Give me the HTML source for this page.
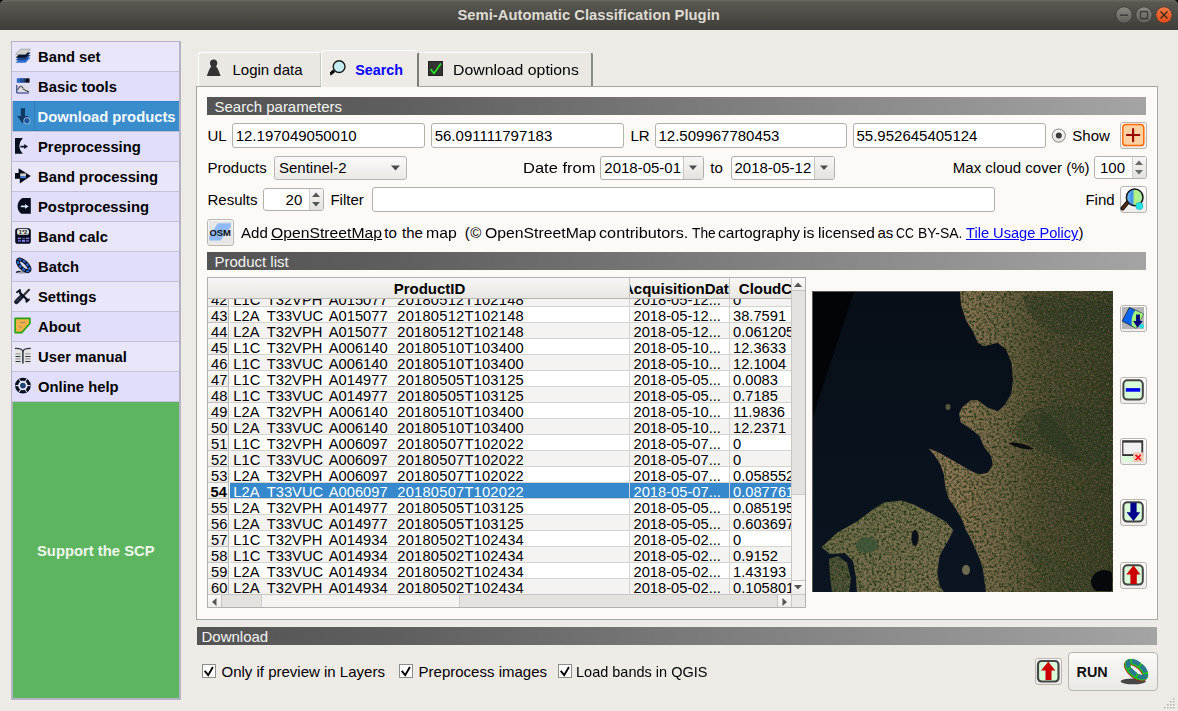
<!DOCTYPE html><html><head><meta charset="utf-8"><style>
html,body{margin:0;padding:0;}
body{width:1178px;height:711px;overflow:hidden;position:relative;background:#eeeae6;font-family:"Liberation Sans",sans-serif;}
.t{position:absolute;white-space:nowrap;line-height:1;}
div{box-sizing:border-box;}
svg{position:absolute;}
.inp{position:absolute;background:#fff;border:1px solid #b2b0ab;border-radius:3px;}
.btn{position:absolute;background:linear-gradient(#fbfaf9,#ebe9e6);border:1px solid #b9b6b1;border-radius:3px;}
</style></head><body>
<div style="position:absolute;left:0px;top:0px;width:1178px;height:10px;background:#000;"></div>
<div style="position:absolute;left:0px;top:0px;width:1178px;height:30px;background:linear-gradient(#5c5a53,#3e3d39);border-radius:5px 5px 0 0;box-shadow:inset 0 1.5px 0 #67655c;"></div>
<div class="t" style="left:457.5px;top:7.87px;font-size:14.8px;font-weight:bold;color:#dfdbd2;">Semi-Automatic Classification Plugin</div>
<svg style="position:absolute;left:1114px;top:5px;" width="62" height="21" viewBox="0 0 62 21">
<defs><linearGradient id="wg" x1="0" y1="0" x2="0" y2="1"><stop offset="0" stop-color="#8c8a84"/><stop offset="1" stop-color="#5f5d58"/></linearGradient>
<linearGradient id="wo" x1="0" y1="0" x2="0" y2="1"><stop offset="0" stop-color="#f47a45"/><stop offset="1" stop-color="#df4a16"/></linearGradient></defs>
<circle cx="10" cy="10" r="8.2" fill="url(#wg)" stroke="#3a3935" stroke-width="0.8"/>
<rect x="6" y="9.5" width="8" height="1.4" fill="#3b3a36"/>
<circle cx="30" cy="10" r="8.2" fill="url(#wg)" stroke="#3a3935" stroke-width="0.8"/>
<rect x="26.5" y="6.6" width="7" height="7" fill="none" stroke="#3b3a36" stroke-width="1.3"/>
<circle cx="50" cy="10" r="8.2" fill="url(#wo)" stroke="#3a3935" stroke-width="0.8"/>
<path d="M46.5 6.5 L53.5 13.5 M53.5 6.5 L46.5 13.5" stroke="#3b2a20" stroke-width="1.4"/>
</svg>
<div style="position:absolute;left:11px;top:41px;width:170px;height:659px;background:#5eb560;border:1px solid #b6b3c6;border-width:1px 2px 2px 2px;"></div>
<div style="position:absolute;left:12px;top:42px;width:167px;height:29px;background:#e9e6f9;"></div>
<div style="position:absolute;left:12px;top:71px;width:167px;height:1px;background:#c4c0d6;"></div>
<div class="t" style="left:38px;top:49.87px;font-size:14.8px;font-weight:bold;color:#000;">Band set</div>
<div style="position:absolute;left:12px;top:72px;width:167px;height:29px;background:#e1defb;"></div>
<div style="position:absolute;left:12px;top:101px;width:167px;height:1px;background:#c4c0d6;"></div>
<div class="t" style="left:38px;top:79.87px;font-size:14.8px;font-weight:bold;color:#000;">Basic tools</div>
<div style="position:absolute;left:12px;top:131px;width:167px;height:1px;background:#c4c0d6;"></div>
<div style="position:absolute;left:13px;top:101px;width:166px;height:30px;background:#3a8dcc;border-top:1px solid #3283c2;border-bottom:1px solid #3283c2;"></div>
<div style="position:absolute;left:34px;top:102px;width:1px;height:29px;background:#2f7fbd;"></div>
<div class="t" style="left:37.5px;top:109.87px;font-size:14.8px;font-weight:bold;color:#f4f8fc;">Download products</div>
<div style="position:absolute;left:12px;top:132px;width:167px;height:29px;background:#e1defb;"></div>
<div style="position:absolute;left:12px;top:161px;width:167px;height:1px;background:#c4c0d6;"></div>
<div class="t" style="left:38px;top:139.87px;font-size:14.8px;font-weight:bold;color:#000;">Preprocessing</div>
<div style="position:absolute;left:12px;top:162px;width:167px;height:29px;background:#e9e6f9;"></div>
<div style="position:absolute;left:12px;top:191px;width:167px;height:1px;background:#c4c0d6;"></div>
<div class="t" style="left:38px;top:169.87px;font-size:14.8px;font-weight:bold;color:#000;">Band processing</div>
<div style="position:absolute;left:12px;top:192px;width:167px;height:29px;background:#e1defb;"></div>
<div style="position:absolute;left:12px;top:221px;width:167px;height:1px;background:#c4c0d6;"></div>
<div class="t" style="left:38px;top:199.87px;font-size:14.8px;font-weight:bold;color:#000;">Postprocessing</div>
<div style="position:absolute;left:12px;top:222px;width:167px;height:29px;background:#e9e6f9;"></div>
<div style="position:absolute;left:12px;top:251px;width:167px;height:1px;background:#c4c0d6;"></div>
<div class="t" style="left:38px;top:229.87px;font-size:14.8px;font-weight:bold;color:#000;">Band calc</div>
<div style="position:absolute;left:12px;top:252px;width:167px;height:29px;background:#e1defb;"></div>
<div style="position:absolute;left:12px;top:281px;width:167px;height:1px;background:#c4c0d6;"></div>
<div class="t" style="left:38px;top:259.87px;font-size:14.8px;font-weight:bold;color:#000;">Batch</div>
<div style="position:absolute;left:12px;top:282px;width:167px;height:29px;background:#e9e6f9;"></div>
<div style="position:absolute;left:12px;top:311px;width:167px;height:1px;background:#c4c0d6;"></div>
<div class="t" style="left:38px;top:289.87px;font-size:14.8px;font-weight:bold;color:#000;">Settings</div>
<div style="position:absolute;left:12px;top:312px;width:167px;height:29px;background:#e1defb;"></div>
<div style="position:absolute;left:12px;top:341px;width:167px;height:1px;background:#c4c0d6;"></div>
<div class="t" style="left:38px;top:319.87px;font-size:14.8px;font-weight:bold;color:#000;">About</div>
<div style="position:absolute;left:12px;top:342px;width:167px;height:29px;background:#e9e6f9;"></div>
<div style="position:absolute;left:12px;top:371px;width:167px;height:1px;background:#c4c0d6;"></div>
<div class="t" style="left:38px;top:349.87px;font-size:14.8px;font-weight:bold;color:#000;">User manual</div>
<div style="position:absolute;left:12px;top:372px;width:167px;height:29px;background:#e1defb;"></div>
<div style="position:absolute;left:12px;top:401px;width:167px;height:1px;background:#c4c0d6;"></div>
<div class="t" style="left:38px;top:379.87px;font-size:14.8px;font-weight:bold;color:#000;">Online help</div>
<div class="t" style="left:37px;top:544.47px;font-size:14.8px;font-weight:bold;color:#f2f7ee;">Support the SCP</div>
<div style="position:absolute;left:198px;top:52px;width:123px;height:35px;background:#ebe8e4;border:1px solid #c9c6c1;border-bottom:none;border-left-color:#fff;border-top-color:#fff;border-radius:3px 3px 0 0;"></div>
<div style="position:absolute;left:417px;top:52px;width:176px;height:35px;background:#ebe8e4;border:1px solid #c9c6c1;border-bottom:none;border-left:2px solid #7e7c78;border-right:2px solid #8b8984;border-top-color:#fff;border-radius:3px 3px 0 0;"></div>
<div style="position:absolute;left:196px;top:86px;width:962px;height:534px;background:#fcf9f6;border:1px solid #a8a6a2;box-shadow:inset -1px -1px 0 #fff;"></div>
<div style="position:absolute;left:321px;top:50px;width:96px;height:37px;background:#eeebe7;border-top:1px solid #fff;border-left:1px solid #fff;border-radius:3px 3px 0 0;"></div>
<div style="position:absolute;left:322px;top:86px;width:95px;height:1px;background:#eeebe7;"></div>
<div class="t" style="left:232.5px;top:62.10px;font-size:15px;color:#000;">Login data</div>
<div class="t" style="left:355.3px;top:62.70px;font-size:14.3px;font-weight:bold;color:#0000ff;">Search</div>
<div class="t" style="left:453.4px;top:62.10px;font-size:15px;color:#000;transform:scaleX(1.055);transform-origin:0 0;">Download options</div>
<svg style="position:absolute;left:205px;top:58px;" width="18" height="20" viewBox="0 0 18 20"><circle cx="8.6" cy="5.2" r="3.6" fill="#333"/><path d="M1.8 18 Q4 11 6.5 8 L10.8 8 Q13.5 11 15.5 18 Z" fill="#333"/></svg>
<svg style="position:absolute;left:329px;top:58px;" width="20" height="20" viewBox="0 0 20 20"><path d="M4,11.4 L6.2,14 L1.6,17.8 L0.9,14.6 Z" fill="#000"/><circle cx="10.1" cy="8.6" r="5.9" fill="#c4eef2" stroke="#1a1a1a" stroke-width="1.4"/></svg>
<svg style="position:absolute;left:428px;top:61px;" width="16" height="15" viewBox="0 0 16 15"><rect x="0.5" y="0.5" width="14" height="14" fill="#333" stroke="#222"/><path d="M2.5 8 L6 12.5 L13 2.5" fill="none" stroke="#22ee22" stroke-width="1.6"/></svg>
<div style="position:absolute;left:207px;top:97px;width:939px;height:18px;background:linear-gradient(90deg,#545454 0%,#5e5e5e 20%,#7d7d7d 55%,#a4a4a4 100%);"></div>
<div class="t" style="left:214.5px;top:98.80px;font-size:15px;color:#f4f4f4;">Search parameters</div>
<div class="t" style="left:207.5px;top:128.10px;font-size:15px;color:#000;">UL</div>
<div class="inp" style="left:232px;top:123px;width:193px;height:25px;"></div>
<div class="t" style="left:235.7px;top:128.10px;font-size:15px;color:#000;">12.197049050010</div>
<div class="inp" style="left:431px;top:123px;width:193px;height:25px;"></div>
<div class="t" style="left:434.7px;top:128.10px;font-size:15px;color:#000;">56.091111797183</div>
<div class="t" style="left:630.5px;top:128.10px;font-size:15px;color:#000;">LR</div>
<div class="inp" style="left:655px;top:123px;width:192px;height:25px;"></div>
<div class="t" style="left:658.5px;top:128.10px;font-size:15px;color:#000;">12.509967780453</div>
<div class="inp" style="left:853px;top:123px;width:193px;height:25px;"></div>
<div class="t" style="left:856.5px;top:128.10px;font-size:15px;color:#000;">55.952645405124</div>
<svg style="position:absolute;left:1051px;top:128px;" width="16" height="16" viewBox="0 0 16 16"><defs><radialGradient id="rg" cx="0.5" cy="0.35" r="0.7"><stop offset="0" stop-color="#fff"/><stop offset="1" stop-color="#dedcd8"/></radialGradient></defs><circle cx="7.8" cy="7.6" r="6.6" fill="url(#rg)" stroke="#8e8c88" stroke-width="1"/><circle cx="7.8" cy="7.6" r="3" fill="#3c3c3c"/></svg>
<div class="t" style="left:1072.3px;top:128.10px;font-size:15px;color:#000;">Show</div>
<div class="btn" style="left:1120px;top:122px;width:27px;height:27px;background:linear-gradient(#fdfcfb,#efedea);"></div>
<svg style="position:absolute;left:1120px;top:122px;" width="27" height="27" viewBox="0 0 27 27"><rect x="2.8" y="2.6" width="21" height="21" rx="3.2" fill="#fdd1a2" stroke="#ff6a06" stroke-width="1.5"/><path d="M13.1 7 V19.3 M6.9 13 H19.3" stroke="#9a0404" stroke-width="2.1" stroke-linecap="round"/></svg>
<div class="t" style="left:207.5px;top:160.10px;font-size:15px;color:#000;">Products</div>
<div class="btn" style="left:274px;top:156px;width:133px;height:24px;"></div>
<div class="t" style="left:279px;top:160.10px;font-size:15px;color:#000;">Sentinel-2</div>
<svg style="position:absolute;left:390px;top:164px;" width="12" height="8" viewBox="0 0 12 8"><path d="M1 1.5 H10 L5.5 6.5 Z" fill="#4a4a4a"/></svg>
<div class="t" style="left:523.2px;top:160.10px;font-size:15px;color:#000;transform:scaleX(1.10);transform-origin:0 0;">Date from</div>
<div class="inp" style="left:600px;top:156px;width:104px;height:24px;"></div>
<div class="t" style="left:604.3px;top:160.10px;font-size:15px;color:#000;">2018-05-01</div>
<div style="position:absolute;left:683px;top:157px;width:20px;height:22px;background:linear-gradient(#f7f6f4,#e4e2de);border-left:1px solid #c8c6c2;border-radius:0 2px 2px 0;"></div>
<svg style="position:absolute;left:688px;top:164px;" width="11" height="8" viewBox="0 0 11 8"><path d="M1 1.5 H9 L5 6 Z" fill="#4a4a4a"/></svg>
<div class="t" style="left:710.3px;top:160.10px;font-size:15px;color:#000;">to</div>
<div class="inp" style="left:731px;top:156px;width:104px;height:24px;"></div>
<div class="t" style="left:734.5px;top:160.10px;font-size:15px;color:#000;">2018-05-12</div>
<div style="position:absolute;left:814px;top:157px;width:20px;height:22px;background:linear-gradient(#f7f6f4,#e4e2de);border-left:1px solid #c8c6c2;border-radius:0 2px 2px 0;"></div>
<svg style="position:absolute;left:819px;top:164px;" width="11" height="8" viewBox="0 0 11 8"><path d="M1 1.5 H9 L5 6 Z" fill="#4a4a4a"/></svg>
<div class="t" style="left:952.8px;top:160.10px;font-size:15px;color:#000;">Max cloud cover (%)</div>
<div class="inp" style="left:1094px;top:156px;width:53px;height:23px;"></div>
<div class="t" style="left:1100px;top:160.10px;font-size:15px;color:#000;">100</div>
<div style="position:absolute;left:1132px;top:157px;width:14px;height:21px;background:linear-gradient(#f7f6f4,#e4e2de);border-left:1px solid #d0cec9;border-radius:0 2px 2px 0;"></div>
<svg style="position:absolute;left:1134px;top:159px;" width="10" height="17" viewBox="0 0 10 17"><path d="M1 6 L5 1.5 L9 6 Z M1 11 L5 15.5 L9 11 Z" fill="#6a6a6a"/></svg>
<div class="t" style="left:207.5px;top:192.10px;font-size:15px;color:#000;">Results</div>
<div class="inp" style="left:263px;top:188px;width:61px;height:23px;"></div>
<div class="t" style="left:285.6px;top:192.10px;font-size:15px;color:#000;">20</div>
<div style="position:absolute;left:309px;top:189px;width:14px;height:21px;background:linear-gradient(#f7f6f4,#e4e2de);border-left:1px solid #d0cec9;border-radius:0 2px 2px 0;"></div>
<svg style="position:absolute;left:311px;top:191px;" width="10" height="17" viewBox="0 0 10 17"><path d="M1 6 L5 1.5 L9 6 Z M1 11 L5 15.5 L9 11 Z" fill="#555"/></svg>
<div class="t" style="left:330.4px;top:192.10px;font-size:15px;color:#000;">Filter</div>
<div class="inp" style="left:372px;top:187px;width:623px;height:25px;"></div>
<div class="t" style="left:1085.4px;top:192.10px;font-size:15px;color:#000;">Find</div>
<div class="btn" style="left:1120px;top:186px;width:27px;height:27px;background:linear-gradient(#fdfcfb,#efedea);"></div>
<svg style="position:absolute;left:1120px;top:186px;" width="27" height="27" viewBox="0 0 27 27"><defs><linearGradient id="fl" x1="0" y1="0" x2="1" y2="0"><stop offset="0" stop-color="#7cc8f8"/><stop offset="0.35" stop-color="#3c8cf0"/><stop offset="0.5" stop-color="#b4f47c"/><stop offset="1" stop-color="#a8f0b0"/></linearGradient></defs><path d="M7.5 16.5 L2.6 22.4" stroke="#111" stroke-width="4.2" stroke-linecap="round"/><path d="M7.3 16.7 L2.8 22.2" stroke="#5a2a0e" stroke-width="2.2" stroke-linecap="round"/><circle cx="14.7" cy="11.4" r="8.3" fill="url(#fl)" stroke="#151515" stroke-width="1.5"/><circle cx="19.4" cy="20" r="3.6" fill="#22e4e4" stroke="#18a8b0" stroke-width="0.6"/></svg>
<div class="btn" style="left:207px;top:219px;width:27px;height:27px;"></div>
<svg style="position:absolute;left:209px;top:221px;" width="23" height="23" viewBox="0 0 23 23"><rect x="0" y="0" width="23" height="22" fill="#e6e6e6"/><path d="M8.9,2.2 L21.8,2.2 L21.8,5.5 L11.7,19.4 L0.3,19.4 L0.3,15.1 Z" fill="#8fbaf6"/><text x="0.4" y="14.6" font-family="Liberation Sans" font-weight="bold" font-size="8.8" textLength="21.4" lengthAdjust="spacingAndGlyphs" fill="#0a0a0a">OSM</text></svg>
<div class="t" style="left:240.5px;top:225.10px;font-size:15px;color:#000;transform:scaleX(1.0038);transform-origin:0 0;">Add</div>
<div class="t" style="left:270.65px;top:225.10px;font-size:15px;color:#000;transform:scaleX(1.0481);transform-origin:0 0;text-decoration:underline;">OpenStreetMap</div>
<div class="t" style="left:384.3px;top:225.10px;font-size:15px;color:#000;transform:scaleX(1.0000);transform-origin:0 0;">to</div>
<div class="t" style="left:402.0px;top:225.10px;font-size:15px;color:#000;transform:scaleX(1.0000);transform-origin:0 0;">the</div>
<div class="t" style="left:426.45px;top:225.10px;font-size:15px;color:#000;transform:scaleX(1.0536);transform-origin:0 0;">map</div>
<div class="t" style="left:464.7px;top:225.10px;font-size:15px;color:#000;transform:scaleX(1.0000);transform-origin:0 0;">(</div>
<div class="t" style="left:470.2px;top:225.10px;font-size:15px;color:#000;transform:scaleX(1.0000);transform-origin:0 0;">©</div>
<div class="t" style="left:485.05px;top:225.10px;font-size:15px;color:#000;transform:scaleX(1.0519);transform-origin:0 0;">OpenStreetMap</div>
<div class="t" style="left:598.52px;top:225.10px;font-size:15px;color:#000;transform:scaleX(1.0825);transform-origin:0 0;">contributors.</div>
<div class="t" style="left:692.1px;top:225.10px;font-size:15px;color:#000;transform:scaleX(0.9160);transform-origin:0 0;">The</div>
<div class="t" style="left:718.46px;top:225.10px;font-size:15px;color:#000;transform:scaleX(1.0359);transform-origin:0 0;">cartography</div>
<div class="t" style="left:803.14px;top:225.10px;font-size:15px;color:#000;transform:scaleX(1.0556);transform-origin:0 0;">is</div>
<div class="t" style="left:818.37px;top:225.10px;font-size:15px;color:#000;transform:scaleX(1.0340);transform-origin:0 0;">licensed</div>
<div class="t" style="left:877.4px;top:225.10px;font-size:15px;color:#000;transform:scaleX(1.0000);transform-origin:0 0;">as</div>
<div class="t" style="left:896.07px;top:225.10px;font-size:15px;color:#000;transform:scaleX(0.8250);transform-origin:0 0;">CC</div>
<div class="t" style="left:917.57px;top:225.10px;font-size:15px;color:#000;transform:scaleX(0.9283);transform-origin:0 0;">BY-SA.</div>
<div class="t" style="left:965.6px;top:225.10px;font-size:15px;color:#000;transform:scaleX(0.9748);transform-origin:0 0;color:#0000ff;text-decoration:underline;">Tile Usage Policy</div>
<div class="t" style="left:1078.5px;top:225.10px;font-size:15px;color:#000;transform:scaleX(1.0000);transform-origin:0 0;">)</div>
<div style="position:absolute;left:207px;top:252px;width:939px;height:18px;background:linear-gradient(90deg,#545454 0%,#5e5e5e 20%,#7d7d7d 55%,#a4a4a4 100%);"></div>
<div class="t" style="left:214.5px;top:253.80px;font-size:15px;color:#f4f4f4;">Product list</div>
<div style="position:absolute;left:207px;top:277px;width:599px;height:331px;background:#fff;border:1px solid #b3b1ad;"></div>
<div style="position:absolute;left:208px;top:298px;width:583px;height:296px;overflow:hidden;">
<div style="position:absolute;left:0;top:-7px;width:21px;height:16px;background:linear-gradient(#f9f8f6,#edebe7);border-bottom:1px solid #c3c1bd;border-right:1px solid #bdbbb7;"></div>
<div style="position:absolute;left:22px;top:-7px;width:561px;height:16px;background:#f4f3f1;border-bottom:1px solid #d5d3cf;"></div>
<div style="position:absolute;left:421px;top:-7px;width:1px;height:16px;background:#d5d3cf;"></div>
<div style="position:absolute;left:521px;top:-7px;width:1px;height:16px;background:#d5d3cf;"></div>
<div class="t" style="left:3.0px;top:-4.94px;font-size:14.7px;color:#000;">42</div>
<div class="t" style="left:25.3px;top:-4.94px;font-size:14.7px;color:#000;">L1C</div>
<div class="t" style="left:58.8px;top:-4.94px;font-size:14.7px;color:#000;">T32VPH</div>
<div class="t" style="left:120.8px;top:-4.94px;font-size:14.7px;color:#000;">A015077</div>
<div class="t" style="left:189.3px;top:-4.94px;font-size:14.7px;color:#000;letter-spacing:0.22px;">20180512T102148</div>
<div class="t" style="left:425.5px;top:-4.94px;font-size:14.7px;color:#000;">2018-05-12...</div>
<div style="position:absolute;left:522px;top:0;width:61px;height:296px;overflow:hidden;"><div class="t" style="left:3px;top:-4.94px;font-size:14.7px;color:#000;">0</div></div>
<div style="position:absolute;left:0;top:9px;width:21px;height:16px;background:linear-gradient(#f9f8f6,#edebe7);border-bottom:1px solid #c3c1bd;border-right:1px solid #bdbbb7;"></div>
<div style="position:absolute;left:22px;top:9px;width:561px;height:16px;background:#ffffff;border-bottom:1px solid #d5d3cf;"></div>
<div style="position:absolute;left:421px;top:9px;width:1px;height:16px;background:#d5d3cf;"></div>
<div style="position:absolute;left:521px;top:9px;width:1px;height:16px;background:#d5d3cf;"></div>
<div class="t" style="left:3.0px;top:11.06px;font-size:14.7px;color:#000;">43</div>
<div class="t" style="left:25.3px;top:11.06px;font-size:14.7px;color:#000;">L2A</div>
<div class="t" style="left:58.8px;top:11.06px;font-size:14.7px;color:#000;">T33VUC</div>
<div class="t" style="left:120.8px;top:11.06px;font-size:14.7px;color:#000;">A015077</div>
<div class="t" style="left:189.3px;top:11.06px;font-size:14.7px;color:#000;letter-spacing:0.22px;">20180512T102148</div>
<div class="t" style="left:425.5px;top:11.06px;font-size:14.7px;color:#000;">2018-05-12...</div>
<div style="position:absolute;left:522px;top:0;width:61px;height:296px;overflow:hidden;"><div class="t" style="left:3px;top:11.06px;font-size:14.7px;color:#000;">38.7591</div></div>
<div style="position:absolute;left:0;top:25px;width:21px;height:16px;background:linear-gradient(#f9f8f6,#edebe7);border-bottom:1px solid #c3c1bd;border-right:1px solid #bdbbb7;"></div>
<div style="position:absolute;left:22px;top:25px;width:561px;height:16px;background:#f4f3f1;border-bottom:1px solid #d5d3cf;"></div>
<div style="position:absolute;left:421px;top:25px;width:1px;height:16px;background:#d5d3cf;"></div>
<div style="position:absolute;left:521px;top:25px;width:1px;height:16px;background:#d5d3cf;"></div>
<div class="t" style="left:3.0px;top:27.06px;font-size:14.7px;color:#000;">44</div>
<div class="t" style="left:25.3px;top:27.06px;font-size:14.7px;color:#000;">L2A</div>
<div class="t" style="left:58.8px;top:27.06px;font-size:14.7px;color:#000;">T32VPH</div>
<div class="t" style="left:120.8px;top:27.06px;font-size:14.7px;color:#000;">A015077</div>
<div class="t" style="left:189.3px;top:27.06px;font-size:14.7px;color:#000;letter-spacing:0.22px;">20180512T102148</div>
<div class="t" style="left:425.5px;top:27.06px;font-size:14.7px;color:#000;">2018-05-12...</div>
<div style="position:absolute;left:522px;top:0;width:61px;height:296px;overflow:hidden;"><div class="t" style="left:3px;top:27.06px;font-size:14.7px;color:#000;">0.061205</div></div>
<div style="position:absolute;left:0;top:41px;width:21px;height:16px;background:linear-gradient(#f9f8f6,#edebe7);border-bottom:1px solid #c3c1bd;border-right:1px solid #bdbbb7;"></div>
<div style="position:absolute;left:22px;top:41px;width:561px;height:16px;background:#ffffff;border-bottom:1px solid #d5d3cf;"></div>
<div style="position:absolute;left:421px;top:41px;width:1px;height:16px;background:#d5d3cf;"></div>
<div style="position:absolute;left:521px;top:41px;width:1px;height:16px;background:#d5d3cf;"></div>
<div class="t" style="left:3.0px;top:43.06px;font-size:14.7px;color:#000;">45</div>
<div class="t" style="left:25.3px;top:43.06px;font-size:14.7px;color:#000;">L1C</div>
<div class="t" style="left:58.8px;top:43.06px;font-size:14.7px;color:#000;">T32VPH</div>
<div class="t" style="left:120.8px;top:43.06px;font-size:14.7px;color:#000;">A006140</div>
<div class="t" style="left:189.3px;top:43.06px;font-size:14.7px;color:#000;letter-spacing:0.22px;">20180510T103400</div>
<div class="t" style="left:425.5px;top:43.06px;font-size:14.7px;color:#000;">2018-05-10...</div>
<div style="position:absolute;left:522px;top:0;width:61px;height:296px;overflow:hidden;"><div class="t" style="left:3px;top:43.06px;font-size:14.7px;color:#000;">12.3633</div></div>
<div style="position:absolute;left:0;top:57px;width:21px;height:16px;background:linear-gradient(#f9f8f6,#edebe7);border-bottom:1px solid #c3c1bd;border-right:1px solid #bdbbb7;"></div>
<div style="position:absolute;left:22px;top:57px;width:561px;height:16px;background:#f4f3f1;border-bottom:1px solid #d5d3cf;"></div>
<div style="position:absolute;left:421px;top:57px;width:1px;height:16px;background:#d5d3cf;"></div>
<div style="position:absolute;left:521px;top:57px;width:1px;height:16px;background:#d5d3cf;"></div>
<div class="t" style="left:3.0px;top:59.06px;font-size:14.7px;color:#000;">46</div>
<div class="t" style="left:25.3px;top:59.06px;font-size:14.7px;color:#000;">L1C</div>
<div class="t" style="left:58.8px;top:59.06px;font-size:14.7px;color:#000;">T33VUC</div>
<div class="t" style="left:120.8px;top:59.06px;font-size:14.7px;color:#000;">A006140</div>
<div class="t" style="left:189.3px;top:59.06px;font-size:14.7px;color:#000;letter-spacing:0.22px;">20180510T103400</div>
<div class="t" style="left:425.5px;top:59.06px;font-size:14.7px;color:#000;">2018-05-10...</div>
<div style="position:absolute;left:522px;top:0;width:61px;height:296px;overflow:hidden;"><div class="t" style="left:3px;top:59.06px;font-size:14.7px;color:#000;">12.1004</div></div>
<div style="position:absolute;left:0;top:73px;width:21px;height:16px;background:linear-gradient(#f9f8f6,#edebe7);border-bottom:1px solid #c3c1bd;border-right:1px solid #bdbbb7;"></div>
<div style="position:absolute;left:22px;top:73px;width:561px;height:16px;background:#ffffff;border-bottom:1px solid #d5d3cf;"></div>
<div style="position:absolute;left:421px;top:73px;width:1px;height:16px;background:#d5d3cf;"></div>
<div style="position:absolute;left:521px;top:73px;width:1px;height:16px;background:#d5d3cf;"></div>
<div class="t" style="left:3.0px;top:75.06px;font-size:14.7px;color:#000;">47</div>
<div class="t" style="left:25.3px;top:75.06px;font-size:14.7px;color:#000;">L1C</div>
<div class="t" style="left:58.8px;top:75.06px;font-size:14.7px;color:#000;">T32VPH</div>
<div class="t" style="left:120.8px;top:75.06px;font-size:14.7px;color:#000;">A014977</div>
<div class="t" style="left:189.3px;top:75.06px;font-size:14.7px;color:#000;letter-spacing:0.22px;">20180505T103125</div>
<div class="t" style="left:425.5px;top:75.06px;font-size:14.7px;color:#000;">2018-05-05...</div>
<div style="position:absolute;left:522px;top:0;width:61px;height:296px;overflow:hidden;"><div class="t" style="left:3px;top:75.06px;font-size:14.7px;color:#000;">0.0083</div></div>
<div style="position:absolute;left:0;top:89px;width:21px;height:16px;background:linear-gradient(#f9f8f6,#edebe7);border-bottom:1px solid #c3c1bd;border-right:1px solid #bdbbb7;"></div>
<div style="position:absolute;left:22px;top:89px;width:561px;height:16px;background:#f4f3f1;border-bottom:1px solid #d5d3cf;"></div>
<div style="position:absolute;left:421px;top:89px;width:1px;height:16px;background:#d5d3cf;"></div>
<div style="position:absolute;left:521px;top:89px;width:1px;height:16px;background:#d5d3cf;"></div>
<div class="t" style="left:3.0px;top:91.06px;font-size:14.7px;color:#000;">48</div>
<div class="t" style="left:25.3px;top:91.06px;font-size:14.7px;color:#000;">L1C</div>
<div class="t" style="left:58.8px;top:91.06px;font-size:14.7px;color:#000;">T33VUC</div>
<div class="t" style="left:120.8px;top:91.06px;font-size:14.7px;color:#000;">A014977</div>
<div class="t" style="left:189.3px;top:91.06px;font-size:14.7px;color:#000;letter-spacing:0.22px;">20180505T103125</div>
<div class="t" style="left:425.5px;top:91.06px;font-size:14.7px;color:#000;">2018-05-05...</div>
<div style="position:absolute;left:522px;top:0;width:61px;height:296px;overflow:hidden;"><div class="t" style="left:3px;top:91.06px;font-size:14.7px;color:#000;">0.7185</div></div>
<div style="position:absolute;left:0;top:105px;width:21px;height:16px;background:linear-gradient(#f9f8f6,#edebe7);border-bottom:1px solid #c3c1bd;border-right:1px solid #bdbbb7;"></div>
<div style="position:absolute;left:22px;top:105px;width:561px;height:16px;background:#ffffff;border-bottom:1px solid #d5d3cf;"></div>
<div style="position:absolute;left:421px;top:105px;width:1px;height:16px;background:#d5d3cf;"></div>
<div style="position:absolute;left:521px;top:105px;width:1px;height:16px;background:#d5d3cf;"></div>
<div class="t" style="left:3.0px;top:107.06px;font-size:14.7px;color:#000;">49</div>
<div class="t" style="left:25.3px;top:107.06px;font-size:14.7px;color:#000;">L2A</div>
<div class="t" style="left:58.8px;top:107.06px;font-size:14.7px;color:#000;">T32VPH</div>
<div class="t" style="left:120.8px;top:107.06px;font-size:14.7px;color:#000;">A006140</div>
<div class="t" style="left:189.3px;top:107.06px;font-size:14.7px;color:#000;letter-spacing:0.22px;">20180510T103400</div>
<div class="t" style="left:425.5px;top:107.06px;font-size:14.7px;color:#000;">2018-05-10...</div>
<div style="position:absolute;left:522px;top:0;width:61px;height:296px;overflow:hidden;"><div class="t" style="left:3px;top:107.06px;font-size:14.7px;color:#000;">11.9836</div></div>
<div style="position:absolute;left:0;top:121px;width:21px;height:16px;background:linear-gradient(#f9f8f6,#edebe7);border-bottom:1px solid #c3c1bd;border-right:1px solid #bdbbb7;"></div>
<div style="position:absolute;left:22px;top:121px;width:561px;height:16px;background:#f4f3f1;border-bottom:1px solid #d5d3cf;"></div>
<div style="position:absolute;left:421px;top:121px;width:1px;height:16px;background:#d5d3cf;"></div>
<div style="position:absolute;left:521px;top:121px;width:1px;height:16px;background:#d5d3cf;"></div>
<div class="t" style="left:3.0px;top:123.06px;font-size:14.7px;color:#000;">50</div>
<div class="t" style="left:25.3px;top:123.06px;font-size:14.7px;color:#000;">L2A</div>
<div class="t" style="left:58.8px;top:123.06px;font-size:14.7px;color:#000;">T33VUC</div>
<div class="t" style="left:120.8px;top:123.06px;font-size:14.7px;color:#000;">A006140</div>
<div class="t" style="left:189.3px;top:123.06px;font-size:14.7px;color:#000;letter-spacing:0.22px;">20180510T103400</div>
<div class="t" style="left:425.5px;top:123.06px;font-size:14.7px;color:#000;">2018-05-10...</div>
<div style="position:absolute;left:522px;top:0;width:61px;height:296px;overflow:hidden;"><div class="t" style="left:3px;top:123.06px;font-size:14.7px;color:#000;">12.2371</div></div>
<div style="position:absolute;left:0;top:137px;width:21px;height:16px;background:linear-gradient(#f9f8f6,#edebe7);border-bottom:1px solid #c3c1bd;border-right:1px solid #bdbbb7;"></div>
<div style="position:absolute;left:22px;top:137px;width:561px;height:16px;background:#ffffff;border-bottom:1px solid #d5d3cf;"></div>
<div style="position:absolute;left:421px;top:137px;width:1px;height:16px;background:#d5d3cf;"></div>
<div style="position:absolute;left:521px;top:137px;width:1px;height:16px;background:#d5d3cf;"></div>
<div class="t" style="left:3.0px;top:139.06px;font-size:14.7px;color:#000;">51</div>
<div class="t" style="left:25.3px;top:139.06px;font-size:14.7px;color:#000;">L1C</div>
<div class="t" style="left:58.8px;top:139.06px;font-size:14.7px;color:#000;">T32VPH</div>
<div class="t" style="left:120.8px;top:139.06px;font-size:14.7px;color:#000;">A006097</div>
<div class="t" style="left:189.3px;top:139.06px;font-size:14.7px;color:#000;letter-spacing:0.22px;">20180507T102022</div>
<div class="t" style="left:425.5px;top:139.06px;font-size:14.7px;color:#000;">2018-05-07...</div>
<div style="position:absolute;left:522px;top:0;width:61px;height:296px;overflow:hidden;"><div class="t" style="left:3px;top:139.06px;font-size:14.7px;color:#000;">0</div></div>
<div style="position:absolute;left:0;top:153px;width:21px;height:16px;background:linear-gradient(#f9f8f6,#edebe7);border-bottom:1px solid #c3c1bd;border-right:1px solid #bdbbb7;"></div>
<div style="position:absolute;left:22px;top:153px;width:561px;height:16px;background:#f4f3f1;border-bottom:1px solid #d5d3cf;"></div>
<div style="position:absolute;left:421px;top:153px;width:1px;height:16px;background:#d5d3cf;"></div>
<div style="position:absolute;left:521px;top:153px;width:1px;height:16px;background:#d5d3cf;"></div>
<div class="t" style="left:3.0px;top:155.06px;font-size:14.7px;color:#000;">52</div>
<div class="t" style="left:25.3px;top:155.06px;font-size:14.7px;color:#000;">L1C</div>
<div class="t" style="left:58.8px;top:155.06px;font-size:14.7px;color:#000;">T33VUC</div>
<div class="t" style="left:120.8px;top:155.06px;font-size:14.7px;color:#000;">A006097</div>
<div class="t" style="left:189.3px;top:155.06px;font-size:14.7px;color:#000;letter-spacing:0.22px;">20180507T102022</div>
<div class="t" style="left:425.5px;top:155.06px;font-size:14.7px;color:#000;">2018-05-07...</div>
<div style="position:absolute;left:522px;top:0;width:61px;height:296px;overflow:hidden;"><div class="t" style="left:3px;top:155.06px;font-size:14.7px;color:#000;">0</div></div>
<div style="position:absolute;left:0;top:169px;width:21px;height:16px;background:linear-gradient(#f9f8f6,#edebe7);border-bottom:1px solid #c3c1bd;border-right:1px solid #bdbbb7;"></div>
<div style="position:absolute;left:22px;top:169px;width:561px;height:16px;background:#ffffff;border-bottom:1px solid #d5d3cf;"></div>
<div style="position:absolute;left:421px;top:169px;width:1px;height:16px;background:#d5d3cf;"></div>
<div style="position:absolute;left:521px;top:169px;width:1px;height:16px;background:#d5d3cf;"></div>
<div class="t" style="left:3.0px;top:171.06px;font-size:14.7px;color:#000;">53</div>
<div class="t" style="left:25.3px;top:171.06px;font-size:14.7px;color:#000;">L2A</div>
<div class="t" style="left:58.8px;top:171.06px;font-size:14.7px;color:#000;">T32VPH</div>
<div class="t" style="left:120.8px;top:171.06px;font-size:14.7px;color:#000;">A006097</div>
<div class="t" style="left:189.3px;top:171.06px;font-size:14.7px;color:#000;letter-spacing:0.22px;">20180507T102022</div>
<div class="t" style="left:425.5px;top:171.06px;font-size:14.7px;color:#000;">2018-05-07...</div>
<div style="position:absolute;left:522px;top:0;width:61px;height:296px;overflow:hidden;"><div class="t" style="left:3px;top:171.06px;font-size:14.7px;color:#000;">0.058552</div></div>
<div style="position:absolute;left:0;top:185px;width:21px;height:16px;background:linear-gradient(#f9f8f6,#edebe7);border-bottom:1px solid #c3c1bd;border-right:1px solid #bdbbb7;"></div>
<div style="position:absolute;left:22px;top:185px;width:561px;height:16px;background:#3488cb;border-bottom:1px solid #d5d3cf;"></div>
<div style="position:absolute;left:421px;top:185px;width:1px;height:16px;background:#d5d3cf;"></div>
<div style="position:absolute;left:521px;top:185px;width:1px;height:16px;background:#d5d3cf;"></div>
<div class="t" style="left:2.5px;top:187.06px;font-size:14.7px;font-weight:bold;color:#000;">54</div>
<div class="t" style="left:25.3px;top:187.06px;font-size:14.7px;color:#fff;">L2A</div>
<div class="t" style="left:58.8px;top:187.06px;font-size:14.7px;color:#fff;">T33VUC</div>
<div class="t" style="left:120.8px;top:187.06px;font-size:14.7px;color:#fff;">A006097</div>
<div class="t" style="left:189.3px;top:187.06px;font-size:14.7px;color:#fff;letter-spacing:0.22px;">20180507T102022</div>
<div class="t" style="left:425.5px;top:187.06px;font-size:14.7px;color:#fff;">2018-05-07...</div>
<div style="position:absolute;left:522px;top:0;width:61px;height:296px;overflow:hidden;"><div class="t" style="left:3px;top:187.06px;font-size:14.7px;color:#fff;">0.087761</div></div>
<div style="position:absolute;left:0;top:201px;width:21px;height:16px;background:linear-gradient(#f9f8f6,#edebe7);border-bottom:1px solid #c3c1bd;border-right:1px solid #bdbbb7;"></div>
<div style="position:absolute;left:22px;top:201px;width:561px;height:16px;background:#ffffff;border-bottom:1px solid #d5d3cf;"></div>
<div style="position:absolute;left:421px;top:201px;width:1px;height:16px;background:#d5d3cf;"></div>
<div style="position:absolute;left:521px;top:201px;width:1px;height:16px;background:#d5d3cf;"></div>
<div class="t" style="left:3.0px;top:203.06px;font-size:14.7px;color:#000;">55</div>
<div class="t" style="left:25.3px;top:203.06px;font-size:14.7px;color:#000;">L2A</div>
<div class="t" style="left:58.8px;top:203.06px;font-size:14.7px;color:#000;">T32VPH</div>
<div class="t" style="left:120.8px;top:203.06px;font-size:14.7px;color:#000;">A014977</div>
<div class="t" style="left:189.3px;top:203.06px;font-size:14.7px;color:#000;letter-spacing:0.22px;">20180505T103125</div>
<div class="t" style="left:425.5px;top:203.06px;font-size:14.7px;color:#000;">2018-05-05...</div>
<div style="position:absolute;left:522px;top:0;width:61px;height:296px;overflow:hidden;"><div class="t" style="left:3px;top:203.06px;font-size:14.7px;color:#000;">0.085195</div></div>
<div style="position:absolute;left:0;top:217px;width:21px;height:16px;background:linear-gradient(#f9f8f6,#edebe7);border-bottom:1px solid #c3c1bd;border-right:1px solid #bdbbb7;"></div>
<div style="position:absolute;left:22px;top:217px;width:561px;height:16px;background:#f4f3f1;border-bottom:1px solid #d5d3cf;"></div>
<div style="position:absolute;left:421px;top:217px;width:1px;height:16px;background:#d5d3cf;"></div>
<div style="position:absolute;left:521px;top:217px;width:1px;height:16px;background:#d5d3cf;"></div>
<div class="t" style="left:3.0px;top:219.06px;font-size:14.7px;color:#000;">56</div>
<div class="t" style="left:25.3px;top:219.06px;font-size:14.7px;color:#000;">L2A</div>
<div class="t" style="left:58.8px;top:219.06px;font-size:14.7px;color:#000;">T33VUC</div>
<div class="t" style="left:120.8px;top:219.06px;font-size:14.7px;color:#000;">A014977</div>
<div class="t" style="left:189.3px;top:219.06px;font-size:14.7px;color:#000;letter-spacing:0.22px;">20180505T103125</div>
<div class="t" style="left:425.5px;top:219.06px;font-size:14.7px;color:#000;">2018-05-05...</div>
<div style="position:absolute;left:522px;top:0;width:61px;height:296px;overflow:hidden;"><div class="t" style="left:3px;top:219.06px;font-size:14.7px;color:#000;">0.603697</div></div>
<div style="position:absolute;left:0;top:233px;width:21px;height:16px;background:linear-gradient(#f9f8f6,#edebe7);border-bottom:1px solid #c3c1bd;border-right:1px solid #bdbbb7;"></div>
<div style="position:absolute;left:22px;top:233px;width:561px;height:16px;background:#ffffff;border-bottom:1px solid #d5d3cf;"></div>
<div style="position:absolute;left:421px;top:233px;width:1px;height:16px;background:#d5d3cf;"></div>
<div style="position:absolute;left:521px;top:233px;width:1px;height:16px;background:#d5d3cf;"></div>
<div class="t" style="left:3.0px;top:235.06px;font-size:14.7px;color:#000;">57</div>
<div class="t" style="left:25.3px;top:235.06px;font-size:14.7px;color:#000;">L1C</div>
<div class="t" style="left:58.8px;top:235.06px;font-size:14.7px;color:#000;">T32VPH</div>
<div class="t" style="left:120.8px;top:235.06px;font-size:14.7px;color:#000;">A014934</div>
<div class="t" style="left:189.3px;top:235.06px;font-size:14.7px;color:#000;letter-spacing:0.22px;">20180502T102434</div>
<div class="t" style="left:425.5px;top:235.06px;font-size:14.7px;color:#000;">2018-05-02...</div>
<div style="position:absolute;left:522px;top:0;width:61px;height:296px;overflow:hidden;"><div class="t" style="left:3px;top:235.06px;font-size:14.7px;color:#000;">0</div></div>
<div style="position:absolute;left:0;top:249px;width:21px;height:16px;background:linear-gradient(#f9f8f6,#edebe7);border-bottom:1px solid #c3c1bd;border-right:1px solid #bdbbb7;"></div>
<div style="position:absolute;left:22px;top:249px;width:561px;height:16px;background:#f4f3f1;border-bottom:1px solid #d5d3cf;"></div>
<div style="position:absolute;left:421px;top:249px;width:1px;height:16px;background:#d5d3cf;"></div>
<div style="position:absolute;left:521px;top:249px;width:1px;height:16px;background:#d5d3cf;"></div>
<div class="t" style="left:3.0px;top:251.06px;font-size:14.7px;color:#000;">58</div>
<div class="t" style="left:25.3px;top:251.06px;font-size:14.7px;color:#000;">L1C</div>
<div class="t" style="left:58.8px;top:251.06px;font-size:14.7px;color:#000;">T33VUC</div>
<div class="t" style="left:120.8px;top:251.06px;font-size:14.7px;color:#000;">A014934</div>
<div class="t" style="left:189.3px;top:251.06px;font-size:14.7px;color:#000;letter-spacing:0.22px;">20180502T102434</div>
<div class="t" style="left:425.5px;top:251.06px;font-size:14.7px;color:#000;">2018-05-02...</div>
<div style="position:absolute;left:522px;top:0;width:61px;height:296px;overflow:hidden;"><div class="t" style="left:3px;top:251.06px;font-size:14.7px;color:#000;">0.9152</div></div>
<div style="position:absolute;left:0;top:265px;width:21px;height:16px;background:linear-gradient(#f9f8f6,#edebe7);border-bottom:1px solid #c3c1bd;border-right:1px solid #bdbbb7;"></div>
<div style="position:absolute;left:22px;top:265px;width:561px;height:16px;background:#ffffff;border-bottom:1px solid #d5d3cf;"></div>
<div style="position:absolute;left:421px;top:265px;width:1px;height:16px;background:#d5d3cf;"></div>
<div style="position:absolute;left:521px;top:265px;width:1px;height:16px;background:#d5d3cf;"></div>
<div class="t" style="left:3.0px;top:267.06px;font-size:14.7px;color:#000;">59</div>
<div class="t" style="left:25.3px;top:267.06px;font-size:14.7px;color:#000;">L2A</div>
<div class="t" style="left:58.8px;top:267.06px;font-size:14.7px;color:#000;">T33VUC</div>
<div class="t" style="left:120.8px;top:267.06px;font-size:14.7px;color:#000;">A014934</div>
<div class="t" style="left:189.3px;top:267.06px;font-size:14.7px;color:#000;letter-spacing:0.22px;">20180502T102434</div>
<div class="t" style="left:425.5px;top:267.06px;font-size:14.7px;color:#000;">2018-05-02...</div>
<div style="position:absolute;left:522px;top:0;width:61px;height:296px;overflow:hidden;"><div class="t" style="left:3px;top:267.06px;font-size:14.7px;color:#000;">1.43193</div></div>
<div style="position:absolute;left:0;top:281px;width:21px;height:16px;background:linear-gradient(#f9f8f6,#edebe7);border-bottom:1px solid #c3c1bd;border-right:1px solid #bdbbb7;"></div>
<div style="position:absolute;left:22px;top:281px;width:561px;height:16px;background:#f4f3f1;border-bottom:1px solid #d5d3cf;"></div>
<div style="position:absolute;left:421px;top:281px;width:1px;height:16px;background:#d5d3cf;"></div>
<div style="position:absolute;left:521px;top:281px;width:1px;height:16px;background:#d5d3cf;"></div>
<div class="t" style="left:3.0px;top:283.06px;font-size:14.7px;color:#000;">60</div>
<div class="t" style="left:25.3px;top:283.06px;font-size:14.7px;color:#000;">L2A</div>
<div class="t" style="left:58.8px;top:283.06px;font-size:14.7px;color:#000;">T32VPH</div>
<div class="t" style="left:120.8px;top:283.06px;font-size:14.7px;color:#000;">A014934</div>
<div class="t" style="left:189.3px;top:283.06px;font-size:14.7px;color:#000;letter-spacing:0.22px;">20180502T102434</div>
<div class="t" style="left:425.5px;top:283.06px;font-size:14.7px;color:#000;">2018-05-02...</div>
<div style="position:absolute;left:522px;top:0;width:61px;height:296px;overflow:hidden;"><div class="t" style="left:3px;top:283.06px;font-size:14.7px;color:#000;">0.105801</div></div>
</div>
<div style="position:absolute;left:208px;top:278px;width:583px;height:21px;background:linear-gradient(#f8f7f5,#e9e7e3);border-bottom:1px solid #b9b7b3;"></div>
<div style="position:absolute;left:229px;top:278px;width:401px;height:20px;border-right:1px solid #c6c4c0;"></div>
<div style="position:absolute;left:630px;top:278px;width:100px;height:20px;border-right:1px solid #c6c4c0;"></div>
<div class="t" style="left:393.7px;top:280.80px;font-size:15px;font-weight:bold;color:#000;">ProductID</div>
<div style="position:absolute;left:630px;top:278px;width:99px;height:20px;overflow:hidden;"><div class="t" style="left:-7px;top:2.8px;font-size:15px;font-weight:bold;">AcquisitionDate</div></div>
<div style="position:absolute;left:730px;top:278px;width:61px;height:20px;overflow:hidden;"><div class="t" style="left:8.8px;top:2.8px;font-size:15px;font-weight:bold;">CloudCover</div></div>
<div style="position:absolute;left:791px;top:278px;width:14px;height:316px;background:#e4e2df;border-left:1px solid #c9c7c3;"></div>
<div style="position:absolute;left:791px;top:278px;width:14px;height:13px;background:linear-gradient(#fbfaf9,#efedea);border-left:1px solid #c9c7c3;border-bottom:1px solid #c6c4c0;"></div>
<svg style="position:absolute;left:793px;top:281px;" width="10" height="7" viewBox="0 0 10 7"><path d="M1 6 L5 1.5 L9 6 Z" fill="#555"/></svg>
<div style="position:absolute;left:792px;top:494px;width:13px;height:87px;background:#f5f4f2;border-top:1px solid #cfcdc9;"></div>
<div style="position:absolute;left:791px;top:580px;width:14px;height:14px;background:linear-gradient(#fbfaf9,#efedea);border-left:1px solid #c9c7c3;border-top:1px solid #c6c4c0;"></div>
<svg style="position:absolute;left:793px;top:584px;" width="10" height="7" viewBox="0 0 10 7"><path d="M1 1 L9 1 L5 5.5 Z" fill="#555"/></svg>
<div style="position:absolute;left:208px;top:594px;width:583px;height:13px;background:#e4e2df;border-top:1px solid #c9c7c3;"></div>
<div style="position:absolute;left:208px;top:594px;width:14px;height:13px;background:linear-gradient(#fbfaf9,#efedea);border-top:1px solid #c9c7c3;border-right:1px solid #c6c4c0;"></div>
<svg style="position:absolute;left:211px;top:597px;" width="7" height="10" viewBox="0 0 7 10"><path d="M5.5 1 L5.5 9 L1 5 Z" fill="#555"/></svg>
<div style="position:absolute;left:261px;top:595px;width:199px;height:12px;background:#f5f4f2;border-left:1px solid #cfcdc9;border-right:1px solid #cfcdc9;"></div>
<div style="position:absolute;left:777px;top:594px;width:14px;height:13px;background:linear-gradient(#fbfaf9,#efedea);border-top:1px solid #c9c7c3;border-left:1px solid #c6c4c0;"></div>
<svg style="position:absolute;left:781px;top:597px;" width="7" height="10" viewBox="0 0 7 10"><path d="M1.5 1 L1.5 9 L6 5 Z" fill="#555"/></svg>
<div style="position:absolute;left:791px;top:594px;width:14px;height:13px;background:#ebe9e6;border-left:1px solid #c9c7c3;border-top:1px solid #c9c7c3;"></div>
<div style="position:absolute;left:197px;top:627px;width:960px;height:18px;background:linear-gradient(90deg,#545454 0%,#5e5e5e 20%,#7d7d7d 55%,#a4a4a4 100%);"></div>
<div class="t" style="left:201.5px;top:628.80px;font-size:15px;color:#f4f4f4;">Download</div>
<svg style="position:absolute;left:202px;top:664px;" width="14" height="14" viewBox="0 0 14 14"><rect x="0.5" y="0.5" width="13" height="13" fill="#fff" stroke="#8f8d89"/><path d="M2.7 6.9 L6.2 11.2 L10.9 3" fill="none" stroke="#000" stroke-width="1.9"/></svg>
<div class="t" style="left:221.5px;top:664.00px;font-size:15px;color:#000;">Only if preview in Layers</div>
<svg style="position:absolute;left:399px;top:664px;" width="14" height="14" viewBox="0 0 14 14"><rect x="0.5" y="0.5" width="13" height="13" fill="#fff" stroke="#8f8d89"/><path d="M2.7 6.9 L6.2 11.2 L10.9 3" fill="none" stroke="#000" stroke-width="1.9"/></svg>
<div class="t" style="left:418.6px;top:664.00px;font-size:15px;color:#000;">Preprocess images</div>
<svg style="position:absolute;left:558px;top:664px;" width="14" height="14" viewBox="0 0 14 14"><rect x="0.5" y="0.5" width="13" height="13" fill="#fff" stroke="#8f8d89"/><path d="M2.7 6.9 L6.2 11.2 L10.9 3" fill="none" stroke="#000" stroke-width="1.9"/></svg>
<div class="t" style="left:576.2px;top:664.00px;font-size:15px;color:#000;transform:scaleX(0.967);transform-origin:0 0;">Load bands in QGIS</div>
<div class="btn" style="left:1035px;top:658px;width:27px;height:27px;"></div>
<svg style="position:absolute;left:1036px;top:659px;" width="24" height="24" viewBox="0 0 24 24"><rect x="2" y="2" width="20.5" height="20.5" rx="3.5" fill="#d8fcd8" stroke="#454545" stroke-width="2.2"/><path d="M12.2,2.8 L19.4,11.6 H15.5 V21 H9.5 V11.6 H5 Z" fill="#cc0000"/></svg>
<div class="btn" style="left:1068px;top:652px;width:90px;height:39px;border-radius:4px;"></div>
<div class="t" style="left:1076.5px;top:665.31px;font-size:14.4px;font-weight:bold;color:#111;">RUN</div>
<svg style="position:absolute;left:1118px;top:655px;" width="34" height="32" viewBox="0 0 34 32"><ellipse cx="15.2" cy="26.4" rx="12.5" ry="2.9" fill="#474747"/><g transform="rotate(40 18.5 14.6)"><ellipse cx="18.5" cy="15.6" rx="11" ry="5.2" fill="none" stroke="#c01010" stroke-width="5.6"/><ellipse cx="18.5" cy="14.8" rx="11" ry="5.2" fill="none" stroke="#22c01e" stroke-width="5.6"/><ellipse cx="18.5" cy="13.9" rx="11" ry="5.2" fill="none" stroke="#2a7890" stroke-width="4.4" stroke-dasharray="8 2"/></g></svg>
<svg style="position:absolute;left:1164px;top:697px;" width="12" height="12" viewBox="0 0 12 12"><g fill="#b8b5b0"><rect x="9" y="1" width="1.5" height="1.5"/><rect x="6" y="4" width="1.5" height="1.5"/><rect x="9" y="4" width="1.5" height="1.5"/><rect x="3" y="7" width="1.5" height="1.5"/><rect x="6" y="7" width="1.5" height="1.5"/><rect x="9" y="7" width="1.5" height="1.5"/><rect x="0" y="10" width="1.5" height="1.5"/><rect x="3" y="10" width="1.5" height="1.5"/><rect x="6" y="10" width="1.5" height="1.5"/><rect x="9" y="10" width="1.5" height="1.5"/></g></svg>
<svg style="position:absolute;left:812px;top:291px;" width="301" height="301" viewBox="0 0 301 301">
<defs>
<linearGradient id="mg" gradientUnits="userSpaceOnUse" x1="140" y1="0" x2="300" y2="0"><stop offset="0" stop-color="#8e7456"/><stop offset="0.3" stop-color="#726446"/><stop offset="0.55" stop-color="#504830"/><stop offset="1" stop-color="#3a3824"/></linearGradient>
<linearGradient id="ig" x1="0" y1="0" x2="1" y2="1"><stop offset="0" stop-color="#6c6a48"/><stop offset="1" stop-color="#7c6e50"/></linearGradient>
<linearGradient id="wt" x1="0" y1="0" x2="0" y2="1"><stop offset="0" stop-color="#070e17"/><stop offset="1" stop-color="#0a1521"/></linearGradient>
<filter id="nz" x="0" y="0" width="302" height="302" filterUnits="userSpaceOnUse" color-interpolation-filters="sRGB"><feTurbulence type="fractalNoise" baseFrequency="0.55" numOctaves="2" seed="7"/><feColorMatrix type="matrix" values="0 0 0 0 0.6  0 0 0 0 0.5  0 0 0 0 0.38  3 0 0 0 -1.55"/></filter><filter id="nz2" x="0" y="0" width="302" height="302" filterUnits="userSpaceOnUse" color-interpolation-filters="sRGB"><feTurbulence type="fractalNoise" baseFrequency="0.4" numOctaves="2" seed="11"/><feColorMatrix type="matrix" values="0 0 0 0 0.13  0 0 0 0 0.22  0 0 0 0 0.08  0 3 0 0 -1.25"/></filter><clipPath id="landclip"><path d="M148,0 L149.2,14.4 L154,28.9 L161.3,40.9 L166,51.7 L172.1,55.3 L185.3,51.7 L193.7,57.7 L199.7,72.2 L201,89 L199.4,102.5 L192.6,114.3 L185.9,120.2 L175.8,116.8 L165.6,109.3 L158.9,109.3 L150.4,116 L147.1,122.8 L148.8,131.2 L158.9,138 L167.3,144.7 L172.4,156.5 L179.1,165 L180.8,173.4 L175.8,181.8 L167.3,183.5 L158.9,180.1 L150.4,175.1 L138.6,168.3 L126.8,161.6 L116.7,157.4 L121.8,163.3 L128.5,173.4 L131.9,183.5 L133.6,197 L136.7,207.6 L143.9,217.7 L151,230.6 L153.9,239.2 L158.2,246.3 L164,259.3 L168.3,269.3 L171.1,279.3 L172.6,290.8 L174,301 L301,301 L301,0 Z"/><path d="M9.6,256.2 L25.5,241.4 L44.6,230.7 L61.6,218 L72.2,211.6 L89.2,209.5 L102,213.7 L119,222.2 L133.8,230.7 L141.3,239.2 L136,249.8 L127.5,264.7 L125.3,281.7 L127.5,294.5 L131.7,301 L45,301 L44,286 L41,270 L33,262 L18,263 Z"/><path d="M17,268 L26,265 L35,272 L39,288 L37,301 L20,301 L18,285 Z"/></clipPath>
</defs>
<rect x="0" y="0" width="302" height="302" fill="#5b5b5b"/>
<rect x="1" y="1" width="300" height="300" fill="url(#wt)"/>
<path d="M1,1 L42,1 L1,125 Z" fill="#020407"/>
<path d="M148,0 L149.2,14.4 L154,28.9 L161.3,40.9 L166,51.7 L172.1,55.3 L185.3,51.7 L193.7,57.7 L199.7,72.2 L201,89 L199.4,102.5 L192.6,114.3 L185.9,120.2 L175.8,116.8 L165.6,109.3 L158.9,109.3 L150.4,116 L147.1,122.8 L148.8,131.2 L158.9,138 L167.3,144.7 L172.4,156.5 L179.1,165 L180.8,173.4 L175.8,181.8 L167.3,183.5 L158.9,180.1 L150.4,175.1 L138.6,168.3 L126.8,161.6 L116.7,157.4 L121.8,163.3 L128.5,173.4 L131.9,183.5 L133.6,197 L136.7,207.6 L143.9,217.7 L151,230.6 L153.9,239.2 L158.2,246.3 L164,259.3 L168.3,269.3 L171.1,279.3 L172.6,290.8 L174,301 L301,301 L301,0 Z" fill="url(#mg)"/>
<path d="M9.6,256.2 L25.5,241.4 L44.6,230.7 L61.6,218 L72.2,211.6 L89.2,209.5 L102,213.7 L119,222.2 L133.8,230.7 L141.3,239.2 L136,249.8 L127.5,264.7 L125.3,281.7 L127.5,294.5 L131.7,301 L45,301 L44,286 L41,270 L33,262 L18,263 Z" fill="url(#ig)"/>
<path d="M17,268 L26,265 L35,272 L39,288 L37,301 L20,301 L18,285 Z" fill="#4e5038"/>

<ellipse cx="136" cy="116" rx="2.5" ry="3" fill="#55553e"/>
<ellipse cx="154" cy="279" rx="4" ry="5" fill="#6e6a50"/>
<path d="M215,20 Q250,60 300,40 L300,10 L210,5 Z" fill="#2f3626" opacity="0.55"/>
<path d="M200,140 Q240,180 300,170 L300,120 Q250,110 215,120 Z" fill="#2e3825" opacity="0.5"/>
<path d="M190,230 Q230,270 290,280 L300,300 L240,300 Z" fill="#3a4129" opacity="0.4"/>
<g clip-path="url(#landclip)"><rect x="0" y="0" width="302" height="302" filter="url(#nz2)"/><rect x="0" y="0" width="302" height="302" filter="url(#nz)" opacity="0.55"/></g><path d="M279,290 Q281,280 291,279 Q300,279 300,283 L300,300 L284,300 Q279,297 279,290 Z" fill="#06090c"/><path d="M196,152 Q210,150 222,158 Q210,160 196,152 Z" fill="#0a0e10"/><ellipse cx="103" cy="247" rx="3.5" ry="8" fill="#0a1018"/><ellipse cx="55" cy="254" rx="11" ry="8" fill="#3a5236" opacity="0.8"/><path d="M230,120 Q260,140 270,175 Q250,165 225,140 Z" fill="#2a3522" opacity="0.5"/>
</svg>
<div class="btn" style="left:1120px;top:305px;width:27px;height:27px;background:linear-gradient(#fdfcfb,#efedea);"></div>
<svg style="position:absolute;left:1120px;top:305px;" width="27" height="27" viewBox="0 0 27 27"><rect x="2" y="2" width="22" height="22" fill="#b5b5b5"/><path d="M9.4,2.4 L23.5,9.1 L16.1,23.2 L2.2,16.1 Z" fill="#0a64f0" stroke="#123" stroke-width="0.8"/><path d="M15.1,5.6 Q10.5,12 11.8,20.6 L16.1,23.2 L23.5,9.1 Z" fill="#a8f878"/><path d="M16.1,9.4 H19.9 V16 H22.8 L17.5,22.8 L13.2,16 H16.1 Z" fill="#00007a"/><circle cx="21.6" cy="21.2" r="2.2" fill="#22dde0"/></svg>
<div class="btn" style="left:1120px;top:377px;width:27px;height:27px;background:linear-gradient(#fdfcfb,#efedea);"></div>
<svg style="position:absolute;left:1120px;top:377px;" width="27" height="27" viewBox="0 0 27 27"><rect x="3.4" y="3.2" width="19.4" height="19.4" rx="4" fill="#d8fcd8" stroke="#444" stroke-width="2"/><rect x="5.8" y="11.1" width="14.4" height="3.6" fill="#0000ee"/></svg>
<div class="btn" style="left:1120px;top:438px;width:27px;height:27px;background:linear-gradient(#fdfcfb,#efedea);"></div>
<svg style="position:absolute;left:1120px;top:438px;" width="27" height="27" viewBox="0 0 27 27"><rect x="2.2" y="2.2" width="21" height="16" fill="#333"/><rect x="3.4" y="4.6" width="18" height="11.5" fill="#f0f0f0"/><rect x="2.2" y="18" width="21.6" height="6" fill="#d8fcd8"/><rect x="13.2" y="14.4" width="10.2" height="9.6" fill="#eec8b0"/><path d="M15.6,16.8 L20.8,22 M20.8,16.8 L15.6,22" stroke="#ff1020" stroke-width="1.7"/></svg>
<div class="btn" style="left:1120px;top:499px;width:27px;height:27px;background:linear-gradient(#fdfcfb,#efedea);"></div>
<svg style="position:absolute;left:1120px;top:499px;" width="27" height="27" viewBox="0 0 27 27"><rect x="3.4" y="3.2" width="19.4" height="19.4" rx="4" fill="#d8fcd8" stroke="#444" stroke-width="2"/><path d="M10.4,3.8 H16.6 V13.2 H20.2 L13.5,22.1 L6.5,13.2 H10.4 Z" fill="#00008a"/></svg>
<div class="btn" style="left:1120px;top:562px;width:27px;height:27px;background:linear-gradient(#fdfcfb,#efedea);"></div>
<svg style="position:absolute;left:1120px;top:562px;" width="27" height="27" viewBox="0 0 27 27"><rect x="3.4" y="3.2" width="19.4" height="19.4" rx="4" fill="#d8fcd8" stroke="#444" stroke-width="2"/><path d="M13.5,3.2 L20.4,12.5 H16.8 V22 H10.4 V12.5 H6.3 Z" fill="#cc0000"/></svg>
<svg style="position:absolute;left:12px;top:44px;" width="24" height="24" viewBox="0 0 24 24"><path d="M8.6,13.4 L18.6,13.4 L13.6,18.7 L3.6,18.7 Z" fill="#2f6fd2" stroke="none" stroke-width="0.6"/><path d="M8.6,11 L18.6,11 L13.6,16.3 L3.6,16.3 Z" fill="#1d4a8e" stroke="none" stroke-width="0.6"/><path d="M8.6,8.4 L18.6,8.4 L13.6,13.7 L3.6,13.7 Z" fill="#061430" stroke="none" stroke-width="0.6"/><path d="M8.6,5.1 L18.6,5.1 L13.6,10.399999999999999 L3.6,10.399999999999999 Z" fill="#d3d3d1" stroke="#8a8a8a" stroke-width="0.6"/></svg>
<svg style="position:absolute;left:12px;top:74px;" width="24" height="24" viewBox="0 0 24 24"><rect x="4.8" y="4.2" width="3.2" height="4.6" fill="#2d6cc0"/><rect x="8" y="4.2" width="3.2" height="4.6" fill="#1f4f98"/><rect x="11.2" y="4.2" width="2" height="4.6" fill="#163a70"/><rect x="13.2" y="4.2" width="4.4" height="4.6" rx="0.8" fill="#08101c"/><rect x="4.4" y="11" width="13.4" height="8.4" fill="#dcdde2"/><path d="M4.8,11 V19 H17" fill="none" stroke="#1c2c7c" stroke-width="1"/><path d="M5.6,15.8 Q8.5,10 10.5,13.5 Q12.5,17 17.4,17.6" fill="none" stroke="#222" stroke-width="1.1" stroke-dasharray="1.6 0.6"/></svg>
<svg style="position:absolute;left:12px;top:104px;" width="24" height="24" viewBox="0 0 24 24"><path d="M8.8,4.2 H13 V12 H16.8 L10.6,19.5 L5.2,12 H8.8 Z" fill="#0f3863"/><circle cx="14.9" cy="16.8" r="3.2" fill="#1a57a0" stroke="#a8c4de" stroke-width="0.9"/></svg>
<svg style="position:absolute;left:12px;top:134px;" width="24" height="24" viewBox="0 0 24 24"><path d="M3,4 H10.8 Q3.8,12 10.8,19.8 H3 Z" fill="#07101e"/><path d="M8.4,11.7 H12.2 V10.1 L16,12.5 L12.2,14.9 V13.4 H8.4 Z" fill="#0a1424"/></svg>
<svg style="position:absolute;left:12px;top:164px;" width="24" height="24" viewBox="0 0 24 24"><path d="M3,9 H6.6 V4.2 L18.8,12 L7.8,19.6 V14.8 H3 Z" fill="#050c18"/><rect x="8.2" y="9.4" width="5.8" height="2.6" fill="#d0d0c8"/><rect x="8.2" y="12" width="5.8" height="2.2" fill="#4a7ad0"/></svg>
<svg style="position:absolute;left:12px;top:194px;" width="24" height="24" viewBox="0 0 24 24"><path d="M10.3,4.1 H18.8 V19.7 H9.3 C6.3,17.5 5.5,14.5 5.6,12 C5.7,9 7,6.3 10.3,4.1 Z" fill="#050d1c"/><path d="M8.8,11.4 H13 V10 L16.8,12.4 L13,14.8 V13.3 H8.8 Z" fill="#d4e2f8"/></svg>
<svg style="position:absolute;left:12px;top:224px;" width="24" height="24" viewBox="0 0 24 24"><rect x="3.2" y="4.2" width="15.6" height="15.6" rx="2.6" fill="#050a1c"/><rect x="5" y="5" width="12" height="5.8" rx="2.6" fill="#e2e2de"/><text x="11" y="9.8" font-family="Liberation Sans" font-weight="bold" font-size="5.6" text-anchor="middle" fill="#222">1*2</text><rect x="5.8" y="13.7" width="3.2" height="1.3" fill="#8a88f0"/><rect x="9.9" y="13.7" width="3.1" height="1.3" fill="#4a4a90"/><rect x="13.9" y="13.7" width="3.2" height="1.3" fill="#8a88f0"/><rect x="5.8" y="15.8" width="3.2" height="2" fill="#5a58b0"/><rect x="9.9" y="15.8" width="3.1" height="2" fill="#8a8af0"/><rect x="13.9" y="15.8" width="3.2" height="2" fill="#5a58b0"/></svg>
<svg style="position:absolute;left:12px;top:254px;" width="24" height="24" viewBox="0 0 24 24"><ellipse cx="9.6" cy="18.3" rx="5.6" ry="1.3" fill="#9a9aa6"/><path d="M4,18.6 Q5.5,17.3 8.5,17.5" stroke="#1a1a2a" stroke-width="1.2" fill="none"/><g transform="rotate(45 11.7 11.4)"><ellipse cx="11.7" cy="11.4" rx="7.6" ry="3.3" fill="none" stroke="#0a1020" stroke-width="3.8"/><ellipse cx="11.7" cy="11.4" rx="7.6" ry="3.3" fill="none" stroke="#2a66cc" stroke-width="2.2" stroke-dasharray="3 1.5"/></g></svg>
<svg style="position:absolute;left:12px;top:284px;" width="24" height="24" viewBox="0 0 24 24"><path d="M10.5,12.5 L17,5.8" stroke="#333" stroke-width="2.2" stroke-linecap="round"/><path d="M4.4,17.8 L9.6,12.6" stroke="#1a2230" stroke-width="4.6" stroke-linecap="round"/><path d="M5.2,17 L8.8,13.4" stroke="#5a6070" stroke-width="1" stroke-dasharray="1 1"/><path d="M7.5,8.5 L15.5,16" stroke="#07101c" stroke-width="2.3"/><path d="M5,8.2 L8,6 M8,6 L8.3,9.2 M17,15.5 L14.5,17.8 M14.5,17.8 L14.2,14.8" stroke="#07101c" stroke-width="1.8" stroke-linecap="round"/></svg>
<svg style="position:absolute;left:12px;top:314px;" width="24" height="24" viewBox="0 0 24 24"><path d="M3.1,4.4 H17.9 V9.5 L9.7,18.6 H3.1 Z" fill="#f2b048" stroke="#22a412" stroke-width="1.6" stroke-linejoin="round"/><path d="M8,8.5 H13 M7,13 H10" stroke="#9a8a78" stroke-width="1.2"/></svg>
<svg style="position:absolute;left:12px;top:344px;" width="24" height="24" viewBox="0 0 24 24"><rect x="3" y="5" width="15.8" height="14.8" fill="#e4e5e1"/><path d="M3,4.5 Q9.3,4.2 10.9,7.2 Q12.5,4.2 18.8,4.5" fill="none" stroke="#2a3444" stroke-width="1.3"/><path d="M10.9,6.8 V19.6" stroke="#2a3444" stroke-width="1.5"/><g stroke-width="1.1"><path d="M3.5,9.9 H8.5 M13.3,9.9 H18.5 M3.5,14.9 H8.5 M13.3,14.9 H18.5" stroke="#9a9c9e"/><path d="M3.5,12.5 H8.5 M13.3,12.5 H18.5 M3.5,17.5 H8.5 M13.3,17.5 H18.5" stroke="#2a3444"/></g></svg>
<svg style="position:absolute;left:12px;top:374px;" width="24" height="24" viewBox="0 0 24 24"><circle cx="10.9" cy="11.6" r="6.3" fill="none" stroke="#07101e" stroke-width="3.1"/><g stroke="#f4f2fc" stroke-width="1"><path d="M3.5,11.6 H7 M14.8,11.6 H18.3 M7.2,5.2 L8.9,8.2 M14.6,5.2 L12.9,8.2 M7.2,18 L8.9,15 M14.6,18 L12.9,15"/></g><circle cx="10.9" cy="11.6" r="3.6" fill="#f4f4f8"/><circle cx="10.9" cy="11.6" r="2.9" fill="#1a4272"/></svg>
</body></html>
